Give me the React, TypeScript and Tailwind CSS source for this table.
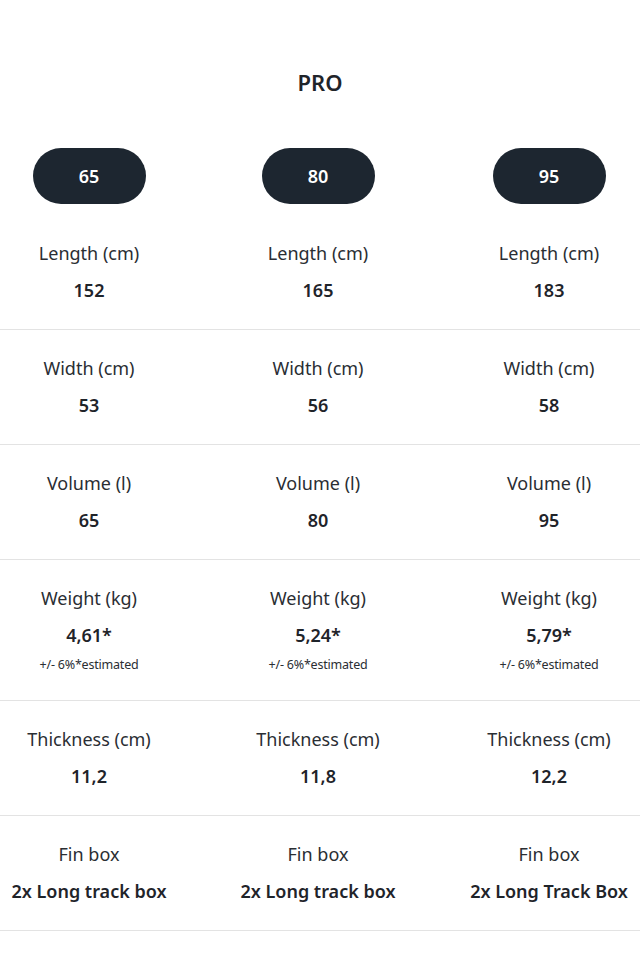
const sizes = ["65", "80", "95"];

type Spec = { label: string; values: string[]; note?: string };

const specs: Spec[] = [
  { label: "Width (cm)", values: ["53", "56", "58"] },
  { label: "Volume (l)", values: ["65", "80", "95"] },
  { label: "Weight (kg)", values: ["4,61*", "5,24*", "5,79*"], note: "+/- 6%*estimated" },
  { label: "Thickness (cm)", values: ["11,2", "11,8", "12,2"] },
  { label: "Fin box", values: ["2x Long track box", "2x Long track box", "2x Long Track Box"] },
];

const cols = "grid grid-cols-[178px_280px_182px]";

function Cell({ label, value, note }: { label: string; value: string; note?: string }) {
  return (
    <div className="flex flex-col items-center">
      <span className="text-[18px] leading-[26px] text-[#2a2e33]">{label}</span>
      <span className="mt-[11px] text-[18px] leading-[26px] font-semibold text-[#1f242a]">{value}</span>
      {note && <span className="mt-[9px] text-[12.5px] leading-[16px] tracking-[-0.2px] text-[#2a2e33]">{note}</span>}
    </div>
  );
}

export default function App() {
  return (
    <div className="w-[640px] h-[960px] bg-white" style={{ fontFamily: '"Noto Sans", "Open Sans", sans-serif' }}>
      <h2 className="pt-[66px] text-center text-[22px] leading-[32px] font-semibold text-[#1f242a]">PRO</h2>

      {/* size pills */}
      <div className={`${cols} mt-[50px]`}>
        {sizes.map((s) => (
          <div key={s} className="flex justify-center">
            <div className="w-[113px] h-[56px] rounded-full bg-[#1d2630] flex items-center justify-center text-white text-[18px] font-semibold">
              {s}
            </div>
          </div>
        ))}
      </div>

      {/* first row, no top border */}
      <div className={`${cols} pt-[36px] pb-[26px] border-b border-[#e3e3e3]`}>
        {["152", "165", "183"].map((v, i) => (
          <Cell key={i} label="Length (cm)" value={v} />
        ))}
      </div>

      {specs.map((row) => (
        <div key={row.label} className={`${cols} pt-[25px] ${row.note ? "pb-[27px]" : "pb-[26px]"} border-b border-[#e3e3e3]`}>
          {row.values.map((v, i) => (
            <Cell key={i} label={row.label} value={v} note={row.note} />
          ))}
        </div>
      ))}
    </div>
  );
}
